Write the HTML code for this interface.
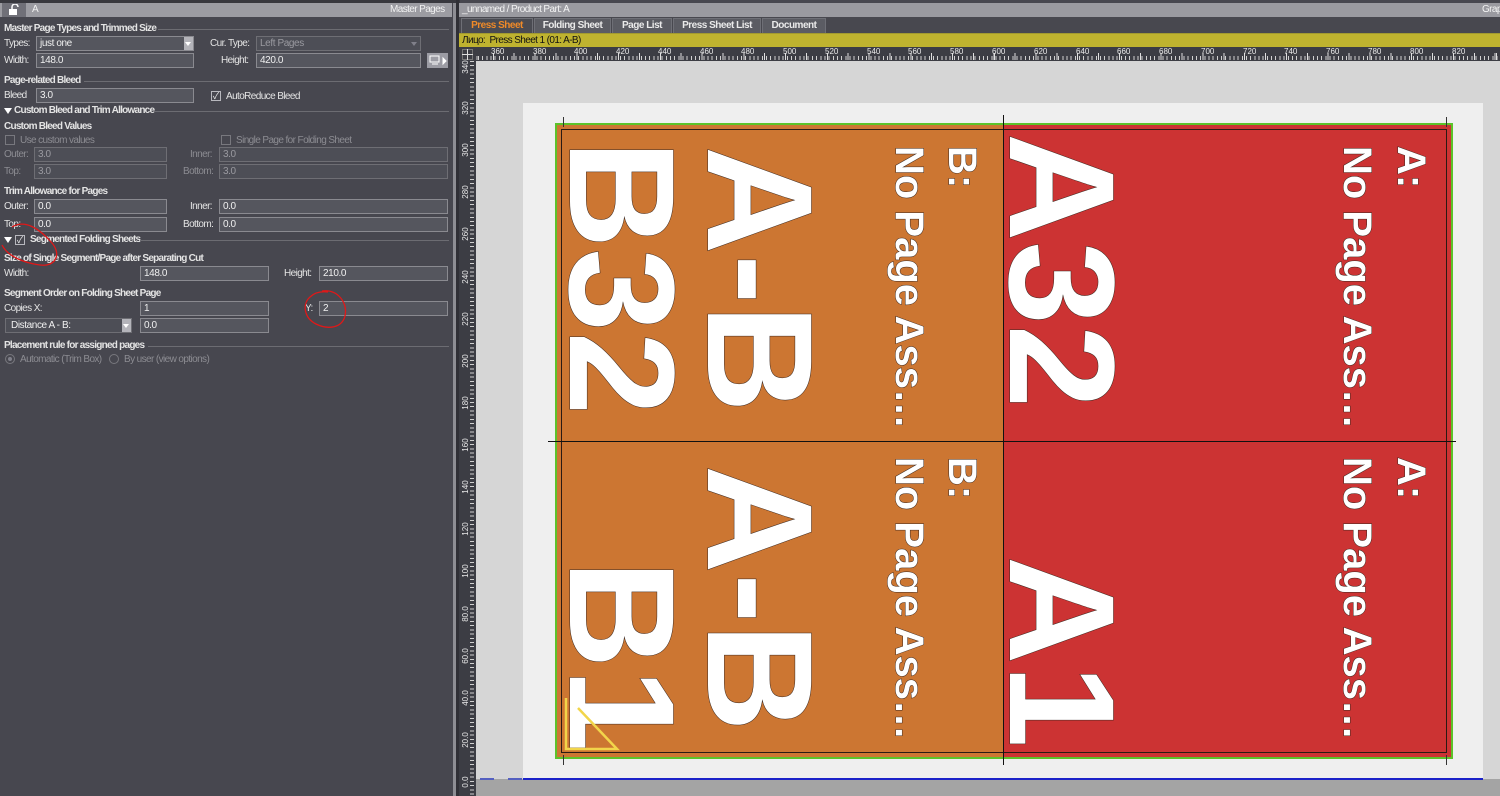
<!DOCTYPE html>
<html><head><meta charset="utf-8"><style>
*{margin:0;padding:0;box-sizing:border-box}
body{width:1500px;height:796px;overflow:hidden;background:#47474f;font-family:"Liberation Sans","Noto Sans CJK SC",sans-serif;font-size:10px;color:#e6e6e6;position:relative}
.a{position:absolute}
.lbl{position:absolute;font-size:10px;color:#e4e4e4;white-space:nowrap;line-height:12px;letter-spacing:-0.6px;margin-top:1px}
.dis{color:#8c8c92}
.b{font-weight:bold;letter-spacing:-0.75px}
.inp{position:absolute;height:15px;border:1px solid #8a8a90;background:#55565e;color:#f0f0f0;font-size:10px;line-height:13px;padding-left:3px;letter-spacing:-0.4px}
.inp.d{border-color:#6e6e74;color:#9a9aa0;background:#4d4e56}
.hl{position:absolute;height:1px;background:#6c6c72}
.cb{position:absolute;width:10px;height:10px;border:1px solid #b8b8be;font-size:9px;line-height:8px;text-align:center;color:#eee}
.cb.d{border-color:#78787e}
.tri{position:absolute;width:0;height:0;border-left:4px solid transparent;border-right:4px solid transparent;border-top:6px solid #fff}
.v{position:absolute;writing-mode:vertical-rl;font-weight:bold;color:#fff;line-height:1;white-space:nowrap;-webkit-text-stroke:1px #3b2a22;paint-order:stroke fill}
.tab{position:absolute;top:18px;height:15px;background:#5b5c63;border:1px solid #6e6f76;border-bottom:none;color:#eaeaea;font-weight:bold;font-size:10px;line-height:14px;text-align:center;letter-spacing:-0.5px}
.rl{position:absolute;font-size:8px;color:#e8e8e8;line-height:8px}
.rv{position:absolute;font-size:8px;color:#e8e8e8;line-height:8px;transform:rotate(-90deg);transform-origin:center}
</style></head><body>
<!-- left panel -->
<div class="a" style="left:0;top:0;width:460px;height:3px;background:#38383e"></div>
<div class="a" style="left:0;top:3px;width:452px;height:14px;background:#9c9ca2"></div>
<div class="a" style="left:2px;top:3px;width:24px;height:14px;background:#707078"></div>
<svg class="a" style="left:8px;top:4px" width="14" height="12"><path d="M4 5V3a3 3 0 0 1 6 0" fill="none" stroke="#fff" stroke-width="1.5"/><rect x="1" y="5" width="8" height="6" fill="#fff"/></svg>
<div class="lbl" style="left:32px;top:3px;color:#f2f2f2">A</div>
<div class="lbl" style="left:390px;top:3px;color:#f2f2f2">Master Pages</div>
<div class="a" style="left:453px;top:3px;width:3px;height:793px;background:#8e8e94"></div>
<div class="a" style="left:456px;top:0;width:3px;height:796px;background:#303036"></div>

<div class="lbl b" style="left:4px;top:22px">Master Page Types and Trimmed Size</div><div class="hl" style="left:158px;top:29px;width:291px"></div>
<div class="lbl" style="left:4px;top:37px">Types:</div>
<div class="inp" style="left:36px;top:36px;width:158px">just one</div>
<div class="a" style="left:184px;top:37px;width:9px;height:13px;background:#b4b4ba"></div><div class="tri" style="left:185px;top:42px;border-left-width:3.5px;border-right-width:3.5px;border-top-width:4px"></div>
<div class="lbl" style="left:210px;top:37px">Cur. Type:</div>
<div class="inp d" style="left:256px;top:36px;width:165px">Left Pages</div>
<div class="tri" style="left:411px;top:42px;border-top-color:#80808a;border-left-width:3.5px;border-right-width:3.5px;border-top-width:4px"></div>
<div class="lbl" style="left:4px;top:54px">Width:</div>
<div class="inp" style="left:36px;top:53px;width:158px">148.0</div>
<div class="lbl" style="left:221px;top:54px">Height:</div>
<div class="inp" style="left:256px;top:53px;width:165px">420.0</div>
<div class="a" style="left:427px;top:53px;width:21px;height:15px;background:#9c9ca4"></div>
<svg class="a" style="left:429px;top:55px" width="18" height="11"><rect x="1" y="1" width="9" height="6" fill="none" stroke="#fff"/><path d="M3 9h6M14 3l3 3-3 3z" stroke="#fff" fill="#fff"/></svg>

<div class="lbl b" style="left:4px;top:74px">Page-related Bleed</div><div class="hl" style="left:84px;top:81px;width:365px"></div>
<div class="lbl" style="left:4px;top:89px">Bleed</div>
<div class="inp" style="left:36px;top:88px;width:158px">3.0</div>
<div class="cb" style="left:211px;top:91px">✓</div>
<div class="lbl" style="left:226px;top:90px">AutoReduce Bleed</div>

<div class="tri" style="left:4px;top:108px"></div>
<div class="lbl b" style="left:14px;top:104px">Custom Bleed and Trim Allowance</div><div class="hl" style="left:155px;top:111px;width:294px"></div>
<div class="lbl b" style="left:4px;top:120px">Custom Bleed Values</div>
<div class="cb d" style="left:5px;top:135px"></div><div class="lbl dis" style="left:20px;top:134px">Use custom values</div>
<div class="cb d" style="left:221px;top:135px"></div><div class="lbl dis" style="left:236px;top:134px">Single Page for Folding Sheet</div>
<div class="lbl dis" style="left:4px;top:148px">Outer:</div><div class="inp d" style="left:34px;top:147px;width:133px">3.0</div>
<div class="lbl dis" style="left:190px;top:148px">Inner:</div><div class="inp d" style="left:219px;top:147px;width:229px">3.0</div>
<div class="lbl dis" style="left:4px;top:165px">Top:</div><div class="inp d" style="left:34px;top:164px;width:133px">3.0</div>
<div class="lbl dis" style="left:183px;top:165px">Bottom:</div><div class="inp d" style="left:219px;top:164px;width:229px">3.0</div>

<div class="lbl b" style="left:4px;top:185px">Trim Allowance for Pages</div>
<div class="lbl" style="left:4px;top:200px">Outer:</div><div class="inp" style="left:34px;top:199px;width:133px">0.0</div>
<div class="lbl" style="left:190px;top:200px">Inner:</div><div class="inp" style="left:219px;top:199px;width:229px">0.0</div>
<div class="lbl" style="left:4px;top:218px">Top:</div><div class="inp" style="left:34px;top:217px;width:133px">0.0</div>
<div class="lbl" style="left:183px;top:218px">Bottom:</div><div class="inp" style="left:219px;top:217px;width:229px">0.0</div>

<div class="tri" style="left:4px;top:237px"></div>
<div class="cb" style="left:15px;top:235px">✓</div>
<div class="lbl b" style="left:30px;top:233px">Segmented Folding Sheets</div><div class="hl" style="left:140px;top:240px;width:309px"></div>
<div class="lbl b" style="left:4px;top:252px">Size of Single Segment/Page after Separating Cut</div>
<div class="lbl" style="left:4px;top:267px">Width:</div><div class="inp" style="left:140px;top:266px;width:129px">148.0</div>
<div class="lbl" style="left:284px;top:267px">Height:</div><div class="inp" style="left:319px;top:266px;width:129px">210.0</div>
<div class="lbl b" style="left:4px;top:287px">Segment Order on Folding Sheet Page</div>
<div class="lbl" style="left:4px;top:302px">Copies X:</div><div class="inp" style="left:140px;top:301px;width:129px">1</div>
<div class="lbl" style="left:305px;top:302px">Y:</div><div class="inp" style="left:319px;top:301px;width:129px">2</div>
<div class="inp" style="left:5px;top:318px;width:127px;background:#4d4e56;border-color:#6e6e74;padding-left:5px">Distance A - B:</div>
<div class="a" style="left:122px;top:319px;width:9px;height:13px;background:#b4b4ba"></div><div class="tri" style="left:123px;top:324px;border-left-width:3.5px;border-right-width:3.5px;border-top-width:4px"></div>
<div class="inp" style="left:140px;top:318px;width:129px">0.0</div>
<div class="lbl b" style="left:4px;top:339px">Placement rule for assigned pages</div><div class="hl" style="left:148px;top:346px;width:301px"></div>
<div class="a" style="left:5px;top:354px;width:10px;height:10px;border:1px solid #78787e;border-radius:50%"></div><div class="a" style="left:8px;top:357px;width:4px;height:4px;background:#80808a;border-radius:50%"></div>
<div class="lbl dis" style="left:20px;top:353px">Automatic (Trim Box)</div>
<div class="a" style="left:109px;top:354px;width:10px;height:10px;border:1px solid #78787e;border-radius:50%"></div>
<div class="lbl dis" style="left:124px;top:353px">By user (view options)</div>
<svg class="a" style="left:0;top:215px" width="70" height="60"><path d="M12 12C25 4 40 14 52 28C62 40 55 52 40 50C25 48 8 42 2 30" fill="none" stroke="#e01818" stroke-width="1.3"/></svg>
<svg class="a" style="left:298px;top:288px" width="55" height="45"><path d="M24 3C40 1 50 15 47 28C44 40 30 42 18 36C6 30 4 16 12 9C16 5 22 3 30 4" fill="none" stroke="#e01818" stroke-width="1.3"/></svg>

<!-- right area -->
<div class="a" style="left:459px;top:3px;width:1041px;height:14px;background:#9a9aa0"></div>
<div class="lbl" style="left:462px;top:3px;color:#f4f4f4">_unnamed / Product Part: A</div>
<div class="lbl" style="left:1482px;top:3px;color:#f4f4f4">Grap</div>
<div class="a" style="left:459px;top:17px;width:1041px;height:16px;background:#48484f"></div>
<div class="tab" style="left:461px;width:72px;color:#f08a28;background:#4a4b52">Press Sheet</div>
<div class="tab" style="left:534px;width:77px">Folding Sheet</div>
<div class="tab" style="left:612px;width:60px">Page List</div>
<div class="tab" style="left:673px;width:88px">Press Sheet List</div>
<div class="tab" style="left:762px;width:64px">Document</div>
<div class="a" style="left:459px;top:33px;width:1041px;height:14px;background:#bfb32f;border-top:1px solid #a29a30"></div>
<div class="lbl" style="left:462px;top:34px;color:#111">Лицо:&nbsp; Press Sheet 1 (01: A-B)</div>
<!-- rulers -->
<div class="a" style="left:459px;top:47px;width:1041px;height:14px;background:#3c3d44"></div>
<div class="a" style="left:476px;top:56px;width:1024px;height:4px;background:repeating-linear-gradient(90deg,#d0d0d0 0 1px,transparent 1px 4.174px);background-position:2px 0"></div>
<div class="a" style="left:476px;top:53px;width:1024px;height:7px;background:repeating-linear-gradient(90deg,#e0e0e0 0 1px,transparent 1px 20.87px);background-position-x:-4px"></div>
<div class="a" style="left:459px;top:61px;width:17px;height:735px;background:#3c3d44"></div>
<div class="a" style="left:470px;top:61px;width:4px;height:735px;background:repeating-linear-gradient(180deg,#d0d0d0 0 1px,transparent 1px 4.21px)"></div>
<div class="a" style="left:462px;top:49px;width:11px;height:11px;border:1px solid #777"></div>
<div class="a" style="left:467px;top:49px;width:1px;height:11px;background:#ddd"></div><div class="a" style="left:462px;top:54px;width:11px;height:1px;background:#ddd"></div>
<div class="rl" style="left:491px;top:48px">360</div><div class="rl" style="left:533px;top:48px">380</div><div class="rl" style="left:574px;top:48px">400</div><div class="rl" style="left:616px;top:48px">420</div><div class="rl" style="left:658px;top:48px">440</div><div class="rl" style="left:700px;top:48px">460</div><div class="rl" style="left:741px;top:48px">480</div><div class="rl" style="left:783px;top:48px">500</div><div class="rl" style="left:825px;top:48px">520</div><div class="rl" style="left:867px;top:48px">540</div><div class="rl" style="left:908px;top:48px">560</div><div class="rl" style="left:950px;top:48px">580</div><div class="rl" style="left:992px;top:48px">600</div><div class="rl" style="left:1034px;top:48px">620</div><div class="rl" style="left:1076px;top:48px">640</div><div class="rl" style="left:1117px;top:48px">660</div><div class="rl" style="left:1159px;top:48px">680</div><div class="rl" style="left:1201px;top:48px">700</div><div class="rl" style="left:1243px;top:48px">720</div><div class="rl" style="left:1284px;top:48px">740</div><div class="rl" style="left:1326px;top:48px">760</div><div class="rl" style="left:1368px;top:48px">780</div><div class="rl" style="left:1410px;top:48px">800</div><div class="rl" style="left:1452px;top:48px">820</div>
<div class="rv" style="left:456px;top:63px;width:20px;text-align:center">340</div>
<div class="rv" style="left:456px;top:104px;width:20px;text-align:center">320</div>
<div class="rv" style="left:456px;top:146px;width:20px;text-align:center">300</div>
<div class="rv" style="left:456px;top:188px;width:20px;text-align:center">280</div>
<div class="rv" style="left:456px;top:230px;width:20px;text-align:center">260</div>
<div class="rv" style="left:456px;top:273px;width:20px;text-align:center">240</div>
<div class="rv" style="left:456px;top:315px;width:20px;text-align:center">220</div>
<div class="rv" style="left:456px;top:357px;width:20px;text-align:center">200</div>
<div class="rv" style="left:456px;top:399px;width:20px;text-align:center">180</div>
<div class="rv" style="left:456px;top:441px;width:20px;text-align:center">160</div>
<div class="rv" style="left:456px;top:483px;width:20px;text-align:center">140</div>
<div class="rv" style="left:456px;top:525px;width:20px;text-align:center">120</div>
<div class="rv" style="left:456px;top:567px;width:20px;text-align:center">100</div>
<div class="rv" style="left:456px;top:610px;width:20px;text-align:center">80.0</div>
<div class="rv" style="left:456px;top:652px;width:20px;text-align:center">60.0</div>
<div class="rv" style="left:456px;top:694px;width:20px;text-align:center">40.0</div>
<div class="rv" style="left:456px;top:736px;width:20px;text-align:center">20.0</div>
<div class="rv" style="left:456px;top:778px;width:20px;text-align:center">0.0</div>
<!-- canvas -->
<div class="a" style="left:476px;top:61px;width:1024px;height:718px;background:#d6d6d6"></div>
<div class="a" style="left:476px;top:779px;width:1024px;height:17px;background:#a4a4a4"></div>
<div class="a" style="left:523px;top:103px;width:960px;height:676px;background:#efefef"></div>
<div class="a" style="left:523px;top:778px;width:960px;height:2px;background:#1b22c8"></div>
<div class="a" style="left:480px;top:778px;width:14px;height:2px;background:#5560c0"></div><div class="a" style="left:508px;top:778px;width:14px;height:2px;background:#5560c0"></div>
<div class="a" style="left:555px;top:123px;width:898px;height:636px;background:#cc7632;border:2px solid #5cc22a"></div>
<div class="a" style="left:1003px;top:125px;width:448px;height:632px;background:#cc3333"></div>
<div class="a" style="left:561px;top:129px;width:886px;height:624px;border:1px solid #2a1a14"></div>
<div class="a" style="left:548px;top:441px;width:908px;height:1px;background:#111"></div>
<div class="a" style="left:1003px;top:115px;width:1px;height:650px;background:#111"></div>
<div class="a" style="left:563px;top:117px;width:1px;height:10px;background:#333"></div>
<div class="a" style="left:1446px;top:117px;width:1px;height:10px;background:#333"></div>
<div class="a" style="left:563px;top:755px;width:1px;height:10px;background:#333"></div>
<div class="a" style="left:1446px;top:755px;width:1px;height:10px;background:#333"></div>
<!-- texts -->
<div class="v" style="left:987px;top:133px;font-size:150px">A32</div>
<div class="v" style="left:1337px;top:146px;font-size:40px">No Page Ass…</div>
<div class="v" style="left:1391px;top:146px;font-size:40px">A:</div>
<div class="v" style="left:987px;top:556px;font-size:150px">A1</div>
<div class="v" style="left:1337px;top:457px;font-size:40px">No Page Ass…</div>
<div class="v" style="left:1391px;top:457px;font-size:40px">A:</div>
<div class="v" style="left:547px;top:140px;font-size:150px">B32</div>
<div class="v" style="left:685px;top:146px;font-size:150px">A-B</div>
<div class="v" style="left:889px;top:146px;font-size:40px">No Page Ass…</div>
<div class="v" style="left:942px;top:146px;font-size:40px">B:</div>
<div class="v" style="left:547px;top:560px;font-size:150px">B1</div>
<div class="v" style="left:685px;top:465px;font-size:150px">A-B</div>
<div class="v" style="left:889px;top:457px;font-size:40px">No Page Ass…</div>
<div class="v" style="left:942px;top:457px;font-size:40px">B:</div>
<svg class="a" style="left:560px;top:692px" width="64" height="62"><path d="M6 6L6 57L57 57L18 16" fill="none" stroke="#f2d54a" stroke-width="2.5"/></svg>
</body></html>
